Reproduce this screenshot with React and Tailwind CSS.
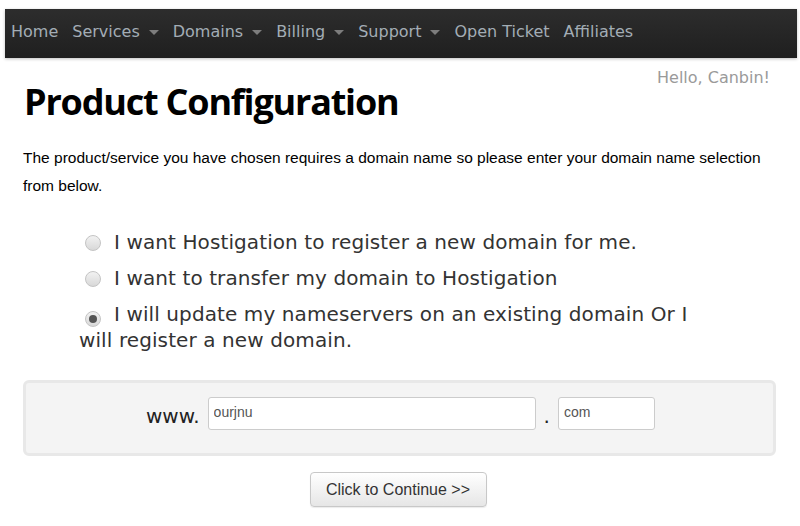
// Product configuration page
const navItems = [
  { label: 'Home' },
  { label: 'Services', caret: true },
  { label: 'Domains', caret: true },
  { label: 'Billing', caret: true },
  { label: 'Support', caret: true },
  { label: 'Open Ticket' },
  { label: 'Affiliates' },
];

const options = [
  { text: 'I want Hostigation to register a new domain for me.' },
  { text: 'I want to transfer my domain to Hostigation' },
  { text: 'I will update my nameservers on an existing domain Or I will register a new domain.', checked: true },
];

function Radio({ checked }) {
  return (
    <span className="inline-flex w-[16px] h-[16px] rounded-full border border-[#c4c4c4] bg-gradient-to-b from-[#f2f2f2] to-[#d8d8d8] items-center justify-center align-[-2px] ml-[6px] mr-[13px]">
      {checked && <span className="w-[8px] h-[8px] rounded-full bg-[#555]" />}
    </span>
  );
}

export default function App() {
  return (
    <div className="w-[800px] h-[526px] bg-white overflow-hidden font-['DejaVu_Sans',sans-serif]">
      {/* Верхнее меню */}
      <div className="mt-[9px] ml-[5px] mr-[3px] h-[49px] bg-gradient-to-b from-[#2d2d2d] to-[#1f1f1f] shadow-[0_1px_3px_rgba(0,0,0,0.25)] flex items-center pl-[6px] pb-[4px] gap-[14px]">
        {navItems.map(item => (
          <div key={item.label} className="flex items-center text-[16px] text-[#a3adb5]">
            <span>{item.label}</span>
            {item.caret && (
              <span className="ml-[9px] w-0 h-0 border-l-[5px] border-r-[5px] border-t-[5px] border-l-transparent border-r-transparent border-t-[#7d7d7d] mt-[2px]" />
            )}
          </div>
        ))}
      </div>

      <div className="pl-[23px] pr-[24px]">
        <div className="flex justify-end mt-[10px] text-[16px] text-[#9a9a9a] pr-[6px] h-[20px] leading-[20px]">
          Hello, Canbin!
        </div>
        <h1 className="font-['Open_Sans',sans-serif] font-bold text-[36px] leading-[40px] tracking-[-1.2px] text-black -mt-[6px] ml-[1px]">
          Product Configuration
        </h1>
        <p className="font-['Liberation_Sans',Arial,sans-serif] text-[15.5px] leading-[28px] text-black mt-[22px]">
          The product/service you have chosen requires a domain name so please enter your domain name selection from below.
        </p>

        <div className="mt-[29px] ml-[56px] w-[640px] text-[20px] tracking-[0.1px] text-[#333] leading-[26px] space-y-[10px]">
          {options.map(o => (
            <div key={o.text}>
              <Radio checked={o.checked} />
              {o.text}
            </div>
          ))}
        </div>

        <div className="mt-[27px] h-[76px] border-[3px] border-[#e8e8e8] rounded-[6px] bg-[#f4f4f4] flex items-center justify-center pl-[2px] pb-[10px]">
          <span className="text-[20px] text-[#222] mr-[8px] mt-[6px]">www.</span>
          <input
            defaultValue="ourjnu"
            className="w-[328px] h-[33px] border border-[#ccc] rounded-[3px] bg-white px-[5px] pb-[3px] font-['Liberation_Sans',Arial,sans-serif] text-[14px] text-[#555] outline-none"
          />
          <span className="mx-[8px] text-[20px] text-[#222] mt-[6px]">.</span>
          <input
            defaultValue="com"
            className="w-[97px] h-[33px] border border-[#ccc] rounded-[3px] bg-white px-[5px] pb-[3px] font-['Liberation_Sans',Arial,sans-serif] text-[14px] text-[#555] outline-none"
          />
        </div>

        <div className="flex justify-center mt-[16px] pr-[3px]">
          <button className="w-[177px] h-[35px] border border-[#c8c8c8] rounded-[4px] bg-gradient-to-b from-white to-[#e6e6e6] font-['Liberation_Sans',Arial,sans-serif] text-[16px] text-[#333] shadow-[0_1px_1px_rgba(0,0,0,0.08)]">
            Click to Continue &gt;&gt;
          </button>
        </div>
      </div>
    </div>
  );
}
